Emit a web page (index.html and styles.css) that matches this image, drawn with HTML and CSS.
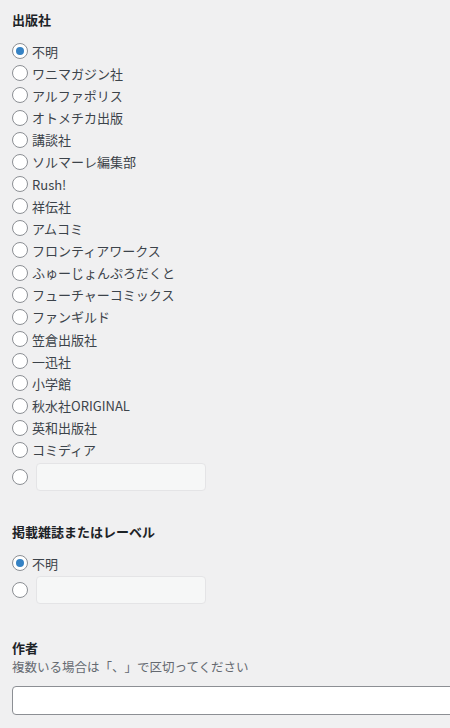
FILE: index.html
```html
<!DOCTYPE html>
<html lang="ja">
<head>
<meta charset="utf-8">
<link rel="stylesheet" href="styles.css">
</head>
<body>
<div class="page">
  <section class="field">
    <h3 class="field-title">出版社</h3>
    <div class="options">
      <label class="opt"><span class="radio checked"></span><span>不明</span></label>
      <label class="opt"><span class="radio"></span><span>ワニマガジン社</span></label>
      <label class="opt"><span class="radio"></span><span>アルファポリス</span></label>
      <label class="opt"><span class="radio"></span><span>オトメチカ出版</span></label>
      <label class="opt"><span class="radio"></span><span>講談社</span></label>
      <label class="opt"><span class="radio"></span><span>ソルマーレ編集部</span></label>
      <label class="opt"><span class="radio"></span><span>Rush!</span></label>
      <label class="opt"><span class="radio"></span><span>祥伝社</span></label>
      <label class="opt"><span class="radio"></span><span>アムコミ</span></label>
      <label class="opt"><span class="radio"></span><span>フロンティアワークス</span></label>
      <label class="opt"><span class="radio"></span><span>ふゅーじょんぷろだくと</span></label>
      <label class="opt"><span class="radio"></span><span>フューチャーコミックス</span></label>
      <label class="opt"><span class="radio"></span><span>ファンギルド</span></label>
      <label class="opt"><span class="radio"></span><span>笠倉出版社</span></label>
      <label class="opt"><span class="radio"></span><span>一迅社</span></label>
      <label class="opt"><span class="radio"></span><span>小学館</span></label>
      <label class="opt"><span class="radio"></span><span>秋水社ORIGINAL</span></label>
      <label class="opt"><span class="radio"></span><span>英和出版社</span></label>
      <label class="opt"><span class="radio"></span><span>コミディア</span></label>
      <label class="opt opt-other"><span class="radio"></span><span class="other-input"></span></label>
    </div>
  </section>

  <section class="field field-2">
    <h3 class="field-title">掲載雑誌またはレーベル</h3>
    <div class="options">
      <label class="opt"><span class="radio checked"></span><span>不明</span></label>
      <label class="opt opt-other"><span class="radio"></span><span class="other-input"></span></label>
    </div>
  </section>

  <section class="field field-3">
    <h3 class="field-title">作者</h3>
    <p class="desc">複数いる場合は「、」で区切ってください</p>
    <div class="text-input"></div>
  </section>
</div>
</body>
</html>
```

FILE: styles.css
```css
html, body {
  margin: 0;
  padding: 0;
  background: #f0f0f1;
  overflow: hidden;
}
body {
  width: 450px;
  height: 728px;
  font-family: "Noto Sans CJK JP", "Noto Sans", sans-serif;
  font-size: 13px;
  color: #1d2327;
  text-spacing-trim: space-all;
}
.page {
  padding: 11px 0 0 12px;
}
.field-title {
  margin: 0;
  font-size: 13px;
  font-weight: 700;
  line-height: 18px;
  color: #1d2327;
}
.options {
  display: flex;
  flex-direction: column;
  margin-top: 11px;
}
.opt {
  display: flex;
  align-items: center;
  height: 22.17px;
  gap: 4px;
  line-height: 1;
  color: #3c434a;
}
.radio {
  box-sizing: border-box;
  width: 16px;
  height: 16px;
  border: 1px solid #8c8f94;
  border-radius: 50%;
  background: #fff;
  flex: none;
  position: relative;
}
.radio.checked::after {
  content: "";
  position: absolute;
  left: 3px;
  top: 3px;
  width: 8px;
  height: 8px;
  border-radius: 50%;
  background: #3582c4;
}
.opt-other {
  height: 32px;
  gap: 8px;
}
.other-input {
  box-sizing: border-box;
  width: 170px;
  height: 28px;
  border: 1px solid #e4e4e6;
  border-radius: 4px;
  background: #f6f7f7;
}
.field-2 {
  margin-top: 30px;
}
.field-3 {
  margin-top: 33px;
}
.desc {
  margin: 1px 0 0;
  line-height: 18px;
  font-size: 12.5px;
  color: #646970;
}
.text-input {
  box-sizing: border-box;
  margin-top: 10px;
  width: 460px;
  height: 29px;
  border: 1px solid #8c8f94;
  border-radius: 4px;
  background: #fff;
}
```
